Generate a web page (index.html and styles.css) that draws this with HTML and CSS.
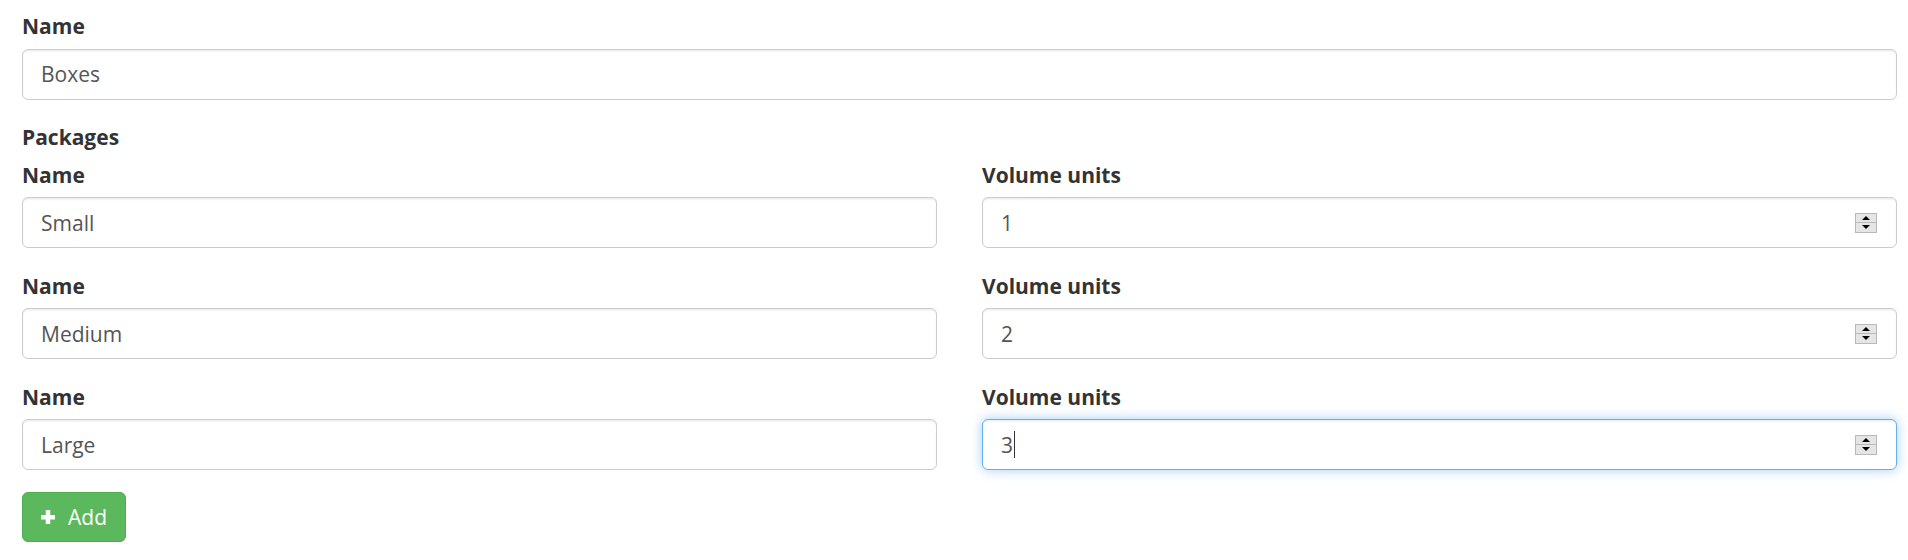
FILE: index.html
```html
<!DOCTYPE html>
<html lang="en">
<head>
<meta charset="utf-8">
<title>Package type</title>
<link rel="stylesheet" href="styles.css">
</head>
<body>
<form class="page">
  <div class="form-group">
    <label class="label" for="name">Name</label>
    <input class="control" id="name" type="text" value="Boxes">
  </div>
  <label class="label">Packages</label>
  <div class="row">
    <div class="form-group">
      <label class="label">Name</label>
      <input class="control" type="text" value="Small">
    </div>
    <div class="form-group">
      <label class="label">Volume units</label>
      <div class="control num-field"><span class="num-value">1</span><span class="spinner"><span class="spin up"></span><span class="spin down"></span></span></div>
    </div>
  </div>
  <div class="row">
    <div class="form-group">
      <label class="label">Name</label>
      <input class="control" type="text" value="Medium">
    </div>
    <div class="form-group">
      <label class="label">Volume units</label>
      <div class="control num-field"><span class="num-value">2</span><span class="spinner"><span class="spin up"></span><span class="spin down"></span></span></div>
    </div>
  </div>
  <div class="row">
    <div class="form-group">
      <label class="label">Name</label>
      <input class="control" type="text" value="Large">
    </div>
    <div class="form-group">
      <label class="label">Volume units</label>
      <div class="control num-field focused"><span class="num-value">3</span><span class="caret"></span><span class="spinner"><span class="spin up"></span><span class="spin down"></span></span></div>
    </div>
  </div>
  <button type="button" class="btn-add"><svg class="plus" width="14" height="14" viewBox="0 0 14 14" aria-hidden="true"><rect x="0" y="5" width="14" height="4.5" fill="#fff"/><rect x="4.75" y="0" width="4.5" height="14" fill="#fff"/></svg><span>Add</span></button>
</form>
</body>
</html>
```

FILE: styles.css
```css
* { box-sizing: border-box; }

html, body {
  margin: 0;
  padding: 0;
  background: #fff;
}

body {
  font-family: "Open Sans", "Liberation Sans", sans-serif;
  font-size: 21px;
  line-height: 30px;
  color: #333;
}

.page {
  padding: 11px 11px 0 22px;
}

.form-group {
  margin-bottom: 22.5px;
}

.label {
  display: block;
  font-weight: 700;
  font-size: 21px;
  line-height: 30px;
  margin-bottom: 7.5px;
  color: #333;
}

.row {
  display: grid;
  grid-template-columns: 1fr 1fr;
  column-gap: 45px;
}

.control {
  display: block;
  width: 100%;
  height: 51px;
  padding: 9px 18px;
  font-family: "Open Sans", "Liberation Sans", sans-serif;
  font-size: 21px;
  line-height: 30px;
  color: #555;
  background: #fff;
  border: 1px solid #ccc;
  border-radius: 6px;
  box-shadow: inset 0 1.5px 1.5px rgba(0, 0, 0, 0.075);
  outline: none;
  margin: 0;
}

.num-field {
  display: flex;
  align-items: center;
  padding: 0 19px 0 18px;
}

.num-value {
  color: #555;
}

.caret {
  width: 1px;
  height: 27px;
  background: #333;
  margin-left: 1px;
}

.spinner {
  margin-left: auto;
  display: flex;
  flex-direction: column;
  width: 22px;
  height: 20px;
  padding: 0;
  background: #f0f0f0;
}

.spin {
  display: flex;
  align-items: center;
  justify-content: center;
  height: 10px;
  background: #e5e5e5;
  border: 1px solid #b9b9b9;
}

.spin.down {
  border-top: 0;
}

.spin::after {
  content: "";
  width: 0;
  height: 0;
  border-left: 4px solid transparent;
  border-right: 4px solid transparent;
}

.spin.up::after {
  border-bottom: 4px solid #000;
}

.spin.down::after {
  border-top: 4px solid #000;
}

.focused {
  border-color: #66afe9;
  box-shadow: inset 0 1.5px 1.5px rgba(0, 0, 0, 0.075), 0 0 12px rgba(102, 175, 233, 0.6);
}

.btn-add {
  display: inline-flex;
  align-items: center;
  gap: 13px;
  height: 50px;
  margin-top: -1px;
  padding: 9px 18px 9px 18px;
  font-family: "Open Sans", "Liberation Sans", sans-serif;
  font-size: 21px;
  line-height: 30px;
  color: #fff;
  background: #5cb85c;
  border: 1px solid #4cae4c;
  border-radius: 6px;
  cursor: pointer;
}

.plus {
  display: block;
  flex: none;
}
```
